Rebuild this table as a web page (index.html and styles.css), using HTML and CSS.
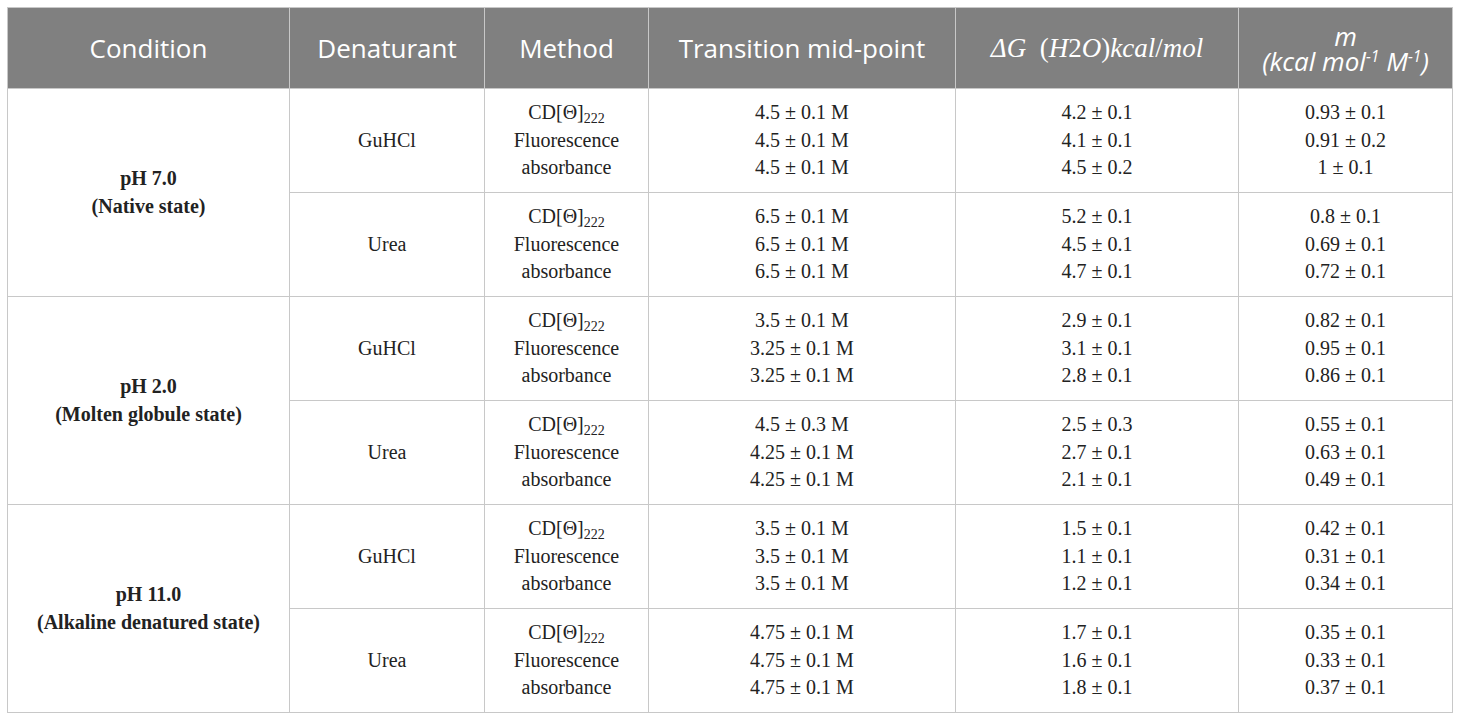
FILE: index.html
```html
<!DOCTYPE html>
<html>
<head>
<meta charset="utf-8">
<link rel="stylesheet" href="styles.css">
</head>
<body>
<div class="page">
<table class="data">
  <colgroup>
    <col class="c-cond"><col class="c-den"><col class="c-meth"><col class="c-trans"><col class="c-dg"><col class="c-m">
  </colgroup>
  <thead>
    <tr>
      <th>Condition</th>
      <th>Denaturant</th>
      <th>Method</th>
      <th>Transition mid-point</th>
      <th class="math"><i>ΔG</i>&nbsp; (<i>H</i>2<i>O</i>)<i>kcal</i>/<i>mol</i></th>
      <th class="mhead"><span class="mline"><i>m</i></span><span class="mline"><i>(kcal mol<sup>-1</sup> M<sup>-1</sup>)</i></span></th>
    </tr>
  </thead>
  <tbody>
    <tr>
      <td rowspan="2" class="cond">pH 7.0<br>(Native state)</td>
      <td>GuHCl</td>
      <td>CD[Θ]<sub>222</sub><br>Fluorescence<br>absorbance</td>
      <td>4.5 ± 0.1 M<br>4.5 ± 0.1 M<br>4.5 ± 0.1 M</td>
      <td>4.2 ± 0.1<br>4.1 ± 0.1<br>4.5 ± 0.2</td>
      <td>0.93 ± 0.1<br>0.91 ± 0.2<br>1 ± 0.1</td>
    </tr>
    <tr>
      <td>Urea</td>
      <td>CD[Θ]<sub>222</sub><br>Fluorescence<br>absorbance</td>
      <td>6.5 ± 0.1 M<br>6.5 ± 0.1 M<br>6.5 ± 0.1 M</td>
      <td>5.2 ± 0.1<br>4.5 ± 0.1<br>4.7 ± 0.1</td>
      <td>0.8 ± 0.1<br>0.69 ± 0.1<br>0.72 ± 0.1</td>
    </tr>
    <tr>
      <td rowspan="2" class="cond">pH 2.0<br>(Molten globule state)</td>
      <td>GuHCl</td>
      <td>CD[Θ]<sub>222</sub><br>Fluorescence<br>absorbance</td>
      <td>3.5 ± 0.1 M<br>3.25 ± 0.1 M<br>3.25 ± 0.1 M</td>
      <td>2.9 ± 0.1<br>3.1 ± 0.1<br>2.8 ± 0.1</td>
      <td>0.82 ± 0.1<br>0.95 ± 0.1<br>0.86 ± 0.1</td>
    </tr>
    <tr>
      <td>Urea</td>
      <td>CD[Θ]<sub>222</sub><br>Fluorescence<br>absorbance</td>
      <td>4.5 ± 0.3 M<br>4.25 ± 0.1 M<br>4.25 ± 0.1 M</td>
      <td>2.5 ± 0.3<br>2.7 ± 0.1<br>2.1 ± 0.1</td>
      <td>0.55 ± 0.1<br>0.63 ± 0.1<br>0.49 ± 0.1</td>
    </tr>
    <tr>
      <td rowspan="2" class="cond">pH 11.0<br>(Alkaline denatured state)</td>
      <td>GuHCl</td>
      <td>CD[Θ]<sub>222</sub><br>Fluorescence<br>absorbance</td>
      <td>3.5 ± 0.1 M<br>3.5 ± 0.1 M<br>3.5 ± 0.1 M</td>
      <td>1.5 ± 0.1<br>1.1 ± 0.1<br>1.2 ± 0.1</td>
      <td>0.42 ± 0.1<br>0.31 ± 0.1<br>0.34 ± 0.1</td>
    </tr>
    <tr>
      <td>Urea</td>
      <td>CD[Θ]<sub>222</sub><br>Fluorescence<br>absorbance</td>
      <td>4.75 ± 0.1 M<br>4.75 ± 0.1 M<br>4.75 ± 0.1 M</td>
      <td>1.7 ± 0.1<br>1.6 ± 0.1<br>1.8 ± 0.1</td>
      <td>0.35 ± 0.1<br>0.33 ± 0.1<br>0.37 ± 0.1</td>
    </tr>
  </tbody>
</table>
</div>
</body>
</html>
```

FILE: styles.css
```css
html, body {
  margin: 0;
  padding: 0;
  background: #ffffff;
}
.page {
  padding: 7px 0 0 7px;
}
.data {
  border-collapse: collapse;
  table-layout: fixed;
  width: 1446px;
  border: 1px solid #c8c8c8;
}
.c-cond { width: 282px; }
.c-den { width: 195px; }
.c-meth { width: 164px; }
.c-trans { width: 307px; }
.c-dg { width: 283px; }
.c-m { width: 214px; }

.data th {
  background: #808080;
  color: #ffffff;
  font-family: "Open Sans", "Lato", sans-serif;
  font-weight: 400;
  font-size: 26px;
  line-height: 28px;
  height: 78px;
  padding: 0 4px;
  text-align: center;
  vertical-align: middle;
  border: 1px solid #c8c8c8;
  border-top: none;
}
.data th.math {
  font-family: "Liberation Serif", "DejaVu Serif", serif;
  font-size: 27px;
}
.data th.mhead {
  font-size: 26px;
  line-height: 25px;
  padding-top: 2px;
}
.mline {
  display: block;
  white-space: nowrap;
}
.data th sup {
  font-size: 0.6em;
  line-height: 0;
  vertical-align: 0.55em;
}
.data td {
  font-family: "Liberation Serif", "Times New Roman", serif;
  font-size: 20px;
  line-height: 27.5px;
  color: #222222;
  text-align: center;
  vertical-align: middle;
  height: 103px;
  padding: 0 6px;
  border: 1px solid #c8c8c8;
}
.data td.cond {
  font-weight: 700;
}
.data td sub {
  font-size: 0.7em;
  line-height: 0;
  vertical-align: -0.3em;
}
```
